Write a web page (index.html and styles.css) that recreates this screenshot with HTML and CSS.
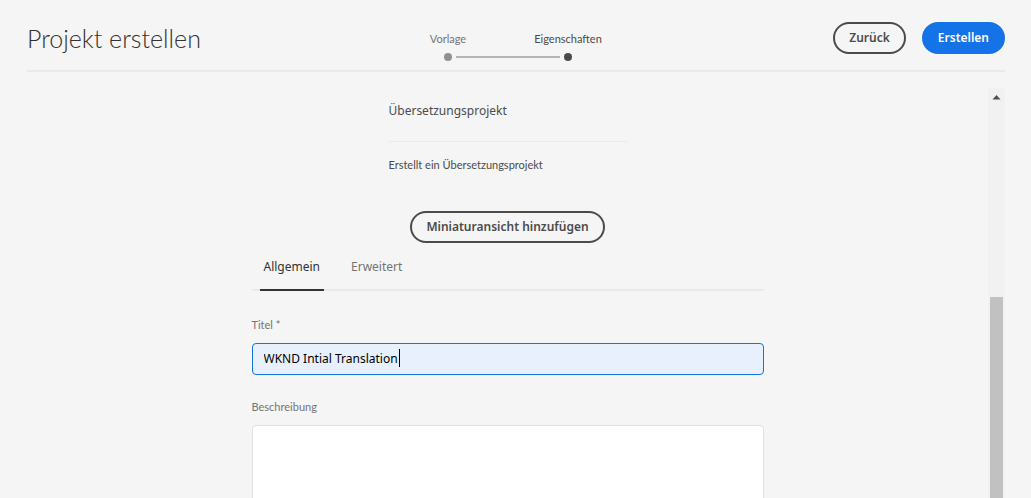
FILE: index.html
```html
<!DOCTYPE html>
<html lang="de">
<head>
<meta charset="utf-8">
<meta name="viewport" content="width=device-width, initial-scale=1">
<title>Projekt erstellen</title>
<link rel="stylesheet" href="styles.css">
</head>
<body>
<header class="header">
  <h1 class="title">Projekt erstellen</h1>
  <ol class="steps">
    <li class="step"><span class="step-label">Vorlage</span><span class="dot"></span></li>
    <li class="step step-current" aria-current="step"><span class="step-label">Eigenschaften</span><span class="dot"></span></li>
  </ol>
  <div class="actions">
    <button class="button" type="button">Zurück</button>
    <button class="button button-primary" type="submit" form="project">Erstellen</button>
  </div>
</header>
<div class="panel">
  <main class="content">
    <section class="card">
      <h2 class="card-title">Übersetzungsprojekt</h2>
      <p class="card-text">Erstellt ein Übersetzungsprojekt</p>
    </section>
    <button class="button button-wide" type="button">Miniaturansicht hinzufügen</button>
    <form class="form" id="project">
      <nav class="tabs" role="tablist">
        <button class="tab tab-active" type="button" role="tab" aria-selected="true">Allgemein</button>
        <button class="tab" type="button" role="tab" aria-selected="false">Erweitert</button>
      </nav>
      <label class="label" for="name">Titel *</label>
      <div class="field">
        <input class="input" id="name" type="text" value="WKND Intial Translation">
        <span class="caret"></span>
      </div>
      <label class="label" for="description">Beschreibung</label>
      <textarea class="input textarea" id="description"></textarea>
    </form>
  </main>
  <div class="scrollbar" aria-hidden="true">
    <svg class="arrow" width="9" height="5" viewBox="0 0 9 5"><path d="M4.500 0L8.500 4.500H.5Z" fill="#505050"/></svg>
    <div class="thumb"></div>
  </div>
</div>
</body>
</html>
```
FILE: styles.css
```css
* { box-sizing: border-box; }
body {
  margin: 0;
  height: 100vh;
  padding: 0 26px 0 27px;
  display: flex;
  flex-direction: column;
  overflow: hidden;
  background: #f5f5f5;
  color: #4b4b4b;
  font-family: "Noto Sans", "Open Sans", sans-serif;
  font-size: 12px;
}
.header {
  flex: none;
  height: 72px;
  display: grid;
  grid-template-columns: 1fr auto 1fr;
  border-bottom: 2px solid #eaeaea;
}
.title {
  margin: 0;
  padding-top: 20px;
  color: #323232;
  font-family: Lato, sans-serif;
  font-size: 25px;
  font-weight: 300;
  line-height: 36px;
  white-space: nowrap;
}
.steps {
  margin: 0;
  padding: 30px 16px 0 0;
  display: flex;
  align-items: flex-start;
  list-style: none;
}
.step {
  position: relative;
  width: 120px;
  display: flex;
  flex-direction: column;
  align-items: center;
  gap: 5px;
  color: #747474;
  font-family: Lato, sans-serif;
  font-size: 11px;
  line-height: 18px;
}
.step-current { color: #4b4b4b; }
.dot {
  width: 8px;
  height: 8px;
  border-radius: 50%;
  background: #909090;
}
.step-current .dot { background: #4b4b4b; }
.step-current::before {
  content: "";
  position: absolute;
  left: -52px;
  bottom: 3px;
  width: 104px;
  height: 2px;
  background: #b3b3b3;
}
.actions {
  padding-top: 22px;
  display: flex;
  justify-content: flex-end;
  align-items: flex-start;
  gap: 16px;
}
.button {
  height: 32px;
  padding: 0 14px;
  border: 2px solid #4b4b4b;
  border-radius: 16px;
  background: transparent;
  color: #4b4b4b;
  font: 600 12px/28px "Noto Sans", sans-serif;
  white-space: nowrap;
}
.button-primary {
  border-color: #1473e6;
  background: #1473e6;
  color: #fff;
}
.panel {
  flex: 1;
  min-height: 0;
  margin-top: 16px;
  display: flex;
}
.content {
  flex: 1;
  display: flex;
  flex-direction: column;
  align-items: center;
  overflow: hidden;
}
.card { width: 238px; }
.card-title {
  margin: 0;
  padding: 12px 0 20px;
  border-bottom: 1px solid #eaeaea;
  font-size: 12px;
  font-weight: 400;
  line-height: 21px;
}
.card-text {
  margin: 0;
  padding: 13px 0 37px;
  font-family: Lato, sans-serif;
  font-size: 11px;
  line-height: 19px;
  white-space: nowrap;
}
.button-wide { flex: none; }
.form {
  width: 100%;
  max-width: 512px;
  display: flex;
  flex-direction: column;
}
.tabs {
  height: 48px;
  margin-bottom: 24px;
  padding-left: 8px;
  display: flex;
  gap: 23px;
  border-bottom: 2px solid #eaeaea;
}
.tab {
  height: 48px;
  padding: 2px 4px 0;
  border: 0;
  border-bottom: 2px solid transparent;
  background: none;
  color: #747474;
  font: 12px/44px "Noto Sans", sans-serif;
}
.tab-active {
  border-color: #323232;
  color: #323232;
}
.label {
  padding-bottom: 8px;
  color: #747474;
  font-family: Lato, sans-serif;
  font-size: 11px;
  line-height: 20px;
}
.field {
  position: relative;
  margin-bottom: 22px;
}
.input {
  display: block;
  width: 100%;
  height: 32px;
  padding: 0 11px 2px;
  border: 1px solid #1473e6;
  border-radius: 4px;
  outline: 0;
  background: #e8f0fe;
  color: #000;
  font: 12px/28px "Noto Sans", sans-serif;
}
.caret {
  position: absolute;
  top: 6px;
  left: 147px;
  width: 1px;
  height: 18px;
  background: #000;
}
.textarea {
  height: 96px;
  border-color: #e1e1e1;
  background: #fff;
  resize: none;
}
.scrollbar {
  flex: none;
  width: 17px;
  padding: 7px 2px 0;
  display: flex;
  flex-direction: column;
  align-items: center;
  background: #f1f1f1;
}
.arrow { flex: none; }
.thumb {
  flex: 1;
  align-self: stretch;
  margin-top: 197px;
  background: #c1c1c1;
}
```
